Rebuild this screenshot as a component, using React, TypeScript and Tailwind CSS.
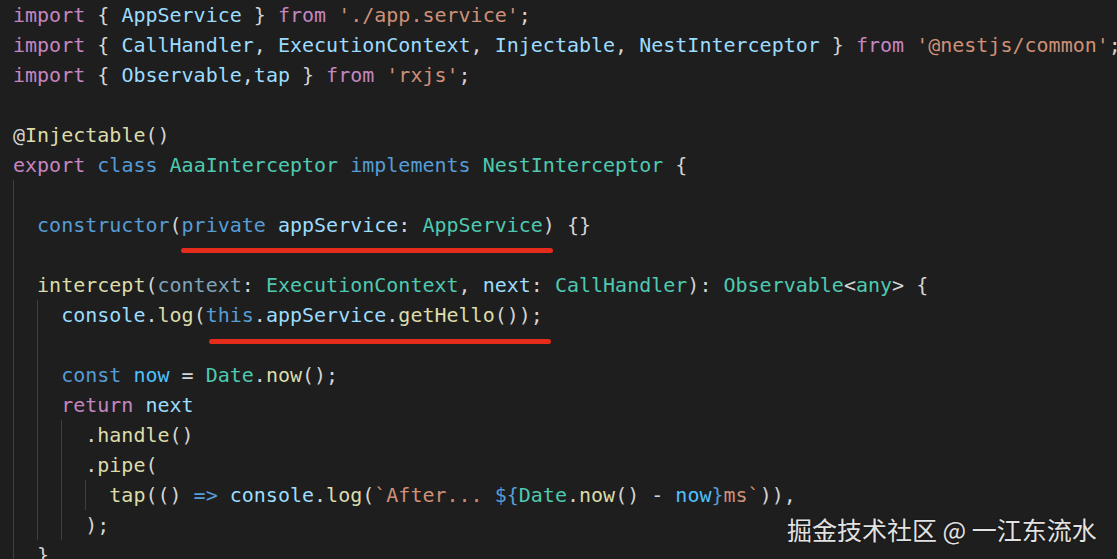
import React from 'react'

type Tok = [string, string]

interface Line {
  indent: number
  guides: number
  tokens: Tok[]
}

// syntax colours, Dark+ style
const C: Record<string, string> = {
  k: 'text-[#c586c0]',
  p: 'text-[#d4d4d4]',
  v: 'text-[#9cdcfe]',
  s: 'text-[#ce9178]',
  b: 'text-[#569cd6]',
  t: 'text-[#4ec9b0]',
  f: 'text-[#dcdcaa]',
  c: 'text-[#4fc1ff]',
  d: 'text-[#7fa3b8]',
}

const lines: Line[] = [
  { indent: 0, guides: 0, tokens: [['import', 'k'], [' { ', 'p'], ['AppService', 'v'], [' } ', 'p'], ['from', 'k'], [' ', 'p'], ["'./app.service'", 's'], [';', 'p']] },
  {
    indent: 0,
    guides: 0,
    tokens: [
      ['import', 'k'], [' { ', 'p'], ['CallHandler', 'v'], [', ', 'p'], ['ExecutionContext', 'v'], [', ', 'p'],
      ['Injectable', 'v'], [', ', 'p'], ['NestInterceptor', 'v'], [' } ', 'p'], ['from', 'k'], [' ', 'p'],
      ["'@nestjs/common'", 's'], [';', 'p'],
    ],
  },
  { indent: 0, guides: 0, tokens: [['import', 'k'], [' { ', 'p'], ['Observable', 'v'], [',', 'p'], ['tap', 'v'], [' } ', 'p'], ['from', 'k'], [' ', 'p'], ["'rxjs'", 's'], [';', 'p']] },
  { indent: 0, guides: 0, tokens: [] },
  { indent: 0, guides: 0, tokens: [['@', 'p'], ['Injectable', 'f'], ['()', 'p']] },
  {
    indent: 0,
    guides: 0,
    tokens: [['export', 'k'], [' ', 'p'], ['class', 'b'], [' ', 'p'], ['AaaInterceptor', 't'], [' ', 'p'], ['implements', 'b'], [' ', 'p'], ['NestInterceptor', 't'], [' {', 'p']],
  },
  { indent: 1, guides: 1, tokens: [] },
  {
    indent: 1,
    guides: 1,
    tokens: [['constructor', 'b'], ['(', 'p'], ['private', 'b'], [' ', 'p'], ['appService', 'v'], [': ', 'p'], ['AppService', 't'], [') {}', 'p']],
  },
  { indent: 1, guides: 1, tokens: [] },
  {
    indent: 1,
    guides: 1,
    tokens: [
      ['intercept', 'f'], ['(', 'p'], ['context', 'd'], [': ', 'p'], ['ExecutionContext', 't'], [', ', 'p'], ['next', 'v'], [': ', 'p'],
      ['CallHandler', 't'], ['): ', 'p'], ['Observable', 't'], ['<', 'p'], ['any', 't'], ['> {', 'p'],
    ],
  },
  {
    indent: 2,
    guides: 2,
    tokens: [['console', 'v'], ['.', 'p'], ['log', 'f'], ['(', 'p'], ['this', 'b'], ['.', 'p'], ['appService', 'v'], ['.', 'p'], ['getHello', 'f'], ['());', 'p']],
  },
  { indent: 2, guides: 2, tokens: [] },
  { indent: 2, guides: 2, tokens: [['const', 'b'], [' ', 'p'], ['now', 'c'], [' = ', 'p'], ['Date', 't'], ['.', 'p'], ['now', 'f'], ['();', 'p']] },
  { indent: 2, guides: 2, tokens: [['return', 'k'], [' ', 'p'], ['next', 'v']] },
  { indent: 3, guides: 3, tokens: [['.', 'p'], ['handle', 'f'], ['()', 'p']] },
  { indent: 3, guides: 3, tokens: [['.', 'p'], ['pipe', 'f'], ['(', 'p']] },
  {
    indent: 4,
    guides: 4,
    tokens: [
      ['tap', 'f'], ['(() ', 'p'], ['=>', 'b'], [' ', 'p'], ['console', 'v'], ['.', 'p'], ['log', 'f'], ['(', 'p'],
      ['`After... ', 's'], ['${', 'b'], ['Date', 't'], ['.', 'p'], ['now', 'f'], ['() - ', 'p'], ['now', 'c'], ['}', 'b'],
      ['ms`', 's'], [')),', 'p'],
    ],
  },
  { indent: 3, guides: 3, tokens: [[');', 'p']] },
  { indent: 1, guides: 1, tokens: [['}', 'p']] },
]

const CodeLine: React.FC<{ line: Line }> = ({ line }) => (
  <div className="flex h-[30px] items-stretch whitespace-pre leading-[30px]">
    {Array.from({ length: line.indent }).map((_, i) => (
      <span
        key={i}
        className={`inline-block w-[2ch] shrink-0 ${i < line.guides ? 'border-l border-[#3f3f3f]' : ''}`}
      />
    ))}
    <span>
      {line.tokens.map(([text, kind], i) => (
        <span key={i} className={C[kind]}>
          {text}
        </span>
      ))}
    </span>
  </div>
)

export default function App() {
  return (
    <div className="relative h-[559px] w-[1117px] overflow-hidden bg-[#1e1e1e]">
      <div className="pl-[13px] font-['DejaVu_Sans_Mono',monospace] text-[20px]">
        {lines.map((line, i) => (
          <CodeLine key={i} line={line} />
        ))}
      </div>

      {/* red hand-drawn underlines */}
      <div className="absolute left-[181px] top-[248px] h-[5px] w-[372px] rounded-full bg-[#e52b1c]" />
      <div className="absolute left-[209px] top-[339px] h-[5px] w-[342px] rounded-full bg-[#e52b1c]" />

      {/* watermark */}
      <div className="absolute left-[787px] top-[512px] whitespace-nowrap font-['Noto_Sans_CJK_SC',sans-serif] text-[25px] leading-[34px] text-[#e2e2e2] [text-shadow:0_0_2px_rgba(0,0,0,0.6)]">
        掘金技术社区 @ 一江东流水
      </div>
    </div>
  )
}
